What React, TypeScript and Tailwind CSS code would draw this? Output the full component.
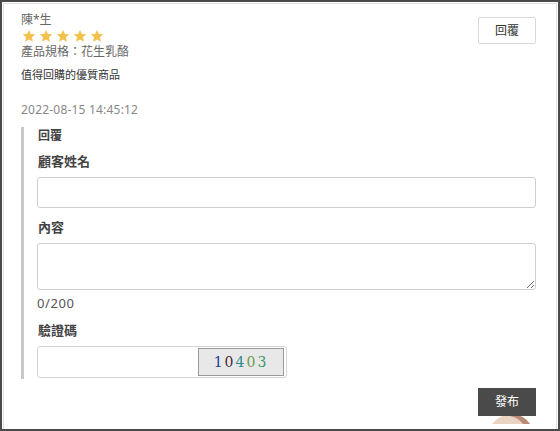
import React from 'react';

const font = { fontFamily: '"Noto Sans", "Noto Sans CJK TC", sans-serif' };

function Star() {
    return (
        <svg width="14" height="14" viewBox="0 0 24 24" className="mr-[3px]">
            <path d="M12 1.5l3.2 6.9 7.4.8-5.5 5.1 1.5 7.4L12 18l-6.6 3.7 1.5-7.4L1.4 9.2l7.4-.8z" fill="#f2c14e" />
        </svg>
    );
}

export default function App() {
    return (
        <div className="w-[560px] h-[431px] bg-white border-2 border-[#4a4a4a] overflow-hidden" style={font}>
            <div className="h-full m-px border border-[#dedede] pl-[17px] pr-[20px] pt-[8px] flex flex-col">
                <div className="flex justify-between">
                    <div>
                        <div className="text-[12px] leading-[16px] text-[#666]">陳*生</div>
                        <div className="flex mt-[1px] ml-px">
                            {[0, 1, 2, 3, 4].map((i) => <Star key={i} />)}
                        </div>
                        <div className="text-[12px] leading-[16px] text-[#666] mt-[1px]">產品規格：花生乳酪</div>
                        <div className="text-[11px] leading-[16px] text-[#333] mt-[7px]">值得回購的優質商品</div>
                    </div>
                    <button className="mt-[5px] w-[58px] h-[27px] border border-[#d8d8d8] bg-white text-[12px] text-[#333] rounded-[2px]">回覆</button>
                </div>

                <div className="text-[12px] leading-[16px] text-[#888] mt-[19px] tracking-[0.2px]">2022-08-15 14:45:12</div>

                <div className="mt-[9px] border-l-[3px] border-[#c8c8c8] pl-[13px] pt-[1px] pb-[1px]">
                    <div className="text-[12px] leading-[16px] font-bold text-[#444] ml-px">回覆</div>
                    <div className="text-[13px] leading-[18px] font-bold text-[#444] mt-[8px] ml-px">顧客姓名</div>
                    <input className="block w-full h-[31px] mt-[7px] border border-[#cfcfcf] rounded-[3px] bg-white" />
                    <div className="text-[13px] leading-[18px] font-bold text-[#444] mt-[10px] ml-px">內容</div>
                    <textarea className="block w-full h-[47px] mt-[7px] border border-[#cfcfcf] rounded-[3px] bg-white resize-y" />
                    <div className="text-[13px] leading-[18px] text-[#555] mt-[4px] tracking-[0.6px]">0/200</div>
                    <div className="text-[13px] leading-[18px] font-bold text-[#444] mt-[9px] ml-px">驗證碼</div>
                    <div className="mt-[7px] w-[250px] h-[32px] border border-[#d4d4d4] rounded-[3px] flex justify-end items-center pr-[2px]">
                        <div className="w-[86px] h-[28px] bg-[#e8e8e8] border border-[#9a9a9a] flex items-center justify-center text-[14px] tracking-[2px]" style={{ fontFamily: '"DejaVu Serif", serif' }}>
                            <span className="text-[#2a3a9e]">1</span>
                            <span className="text-[#4a2a3a]">0</span>
                            <span className="text-[#2a8c8c]">4</span>
                            <span className="text-[#6a9a4a]">0</span>
                            <span className="text-[#3a9a6a]">3</span>
                        </div>
                    </div>
                </div>

                <div className="flex justify-end mt-[9px] relative">
                    <svg className="absolute right-[4px] top-[24px]" width="44" height="12" viewBox="0 0 44 12">
                        <path d="M4 12 Q12 2 26 2 Q36 3 42 12 Z" fill="#ead3c2" />
                        <path d="M24 2 Q36 3 42 12 L35 12 Q31 6 22 4 Z" fill="#b98a74" />
                    </svg>
                    <button className="relative w-[58px] h-[28px] bg-[#4a4a4a] text-white text-[12px]">發布</button>
                </div>
            </div>
        </div>
    );
}
